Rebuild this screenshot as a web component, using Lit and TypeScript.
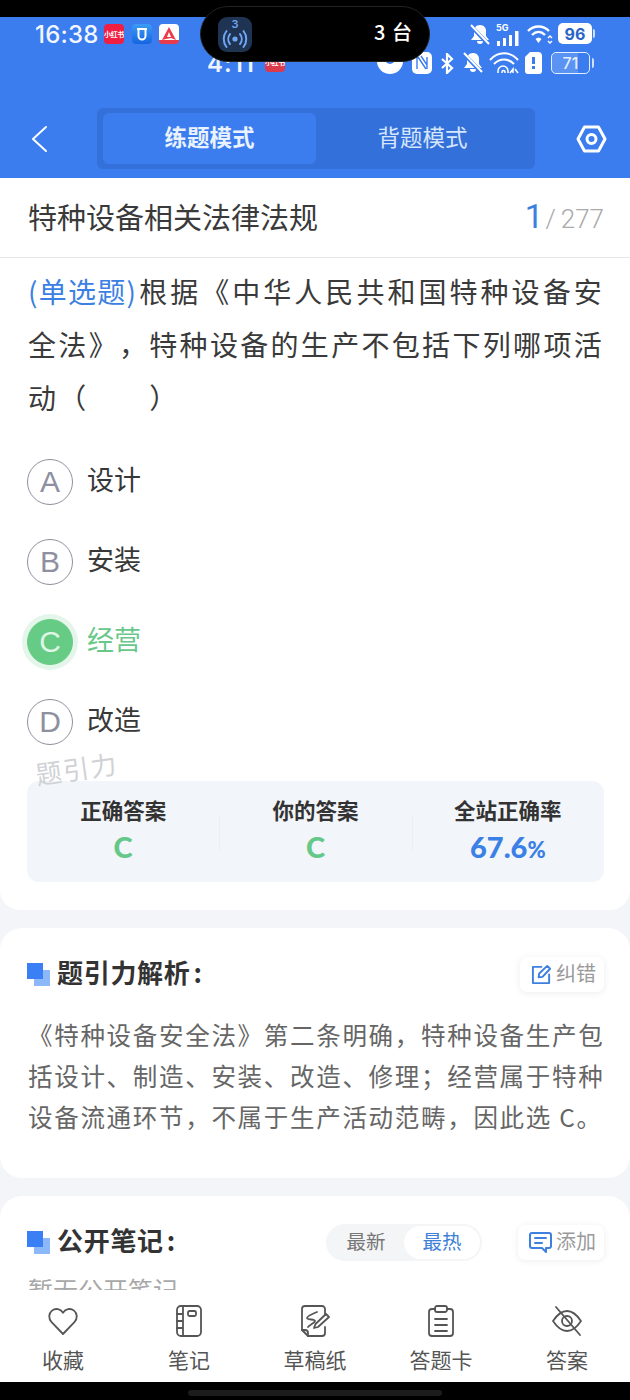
import { LitElement, html, css, svg } from "lit";
import { customElement } from "lit/decorators.js";

const line = (content: unknown, size: number, vb = 32) => html`<svg width=${size} height=${size} viewBox="0 0 ${vb} ${vb}" fill="none" stroke="currentColor" stroke-width="1.800" stroke-linecap="round" stroke-linejoin="round">${content}</svg>`;

const navIcons = {
  heart: svg`<path d="M16 29 4.600 17.200C1.200 13.500 1.600 8.300 5 5.600c3.600-2.800 8.400-1.700 11 2.200 2.600-3.900 7.400-5 11-2.200 3.400 2.700 3.800 7.900.4 11.600Z"/>`,
  book: svg`<rect x="4" y="1" width="24" height="30" rx="4"/><path d="M10 1v30M4 9h6M4 16h6M4 23h6"/><rect x="15" y="6" width="8" height="5" rx="1.500"/>`,
  draft: svg`<path d="M26 10V4a3 3 0 0 0-3-3H6a3 3 0 0 0-3 3v21l6 6h14a3 3 0 0 0 3-3v-6"/><path d="M3 25h3a3 3 0 0 1 3 3v3"/><path d="M18 7c-5 2-10 4-10 6s8 1 8 3-5 3-7 6"/><path d="m15 23 1.500-4L27 9l3 3-11 10Z"/>`,
  card: svg`<path d="M10 4H7a3 3 0 0 0-3 3v21a3 3 0 0 0 3 3h18a3 3 0 0 0 3-3V7a3 3 0 0 0-3-3h-3"/><rect x="10" y="1" width="12" height="6" rx="2"/><path d="M10 14h12M10 20h12M10 26h12"/>`,
  eye: svg`<path d="M2 16c4-6 9-10 14-10s10 4 14 10c-4 6-9 10-14 10S6 22 2 16Z"/><circle cx="16" cy="16" r="5"/><path d="M5 2l24 28"/>`,
};

@customElement("app-root")
export class AppRoot extends LitElement {
  static styles = css`
    :host { display: block; width: 630px; height: 1400px; position: relative; overflow: hidden; background: #f3f5f8; color: #333; font-family: "Noto Sans CJK SC", "Noto Sans", sans-serif; }
    .frame { height: 1400px; display: flex; flex-direction: column; }
    .topblack { height: 17px; background: #000; flex: none; }
    .head { height: 161px; flex: none; background: #3b7dee; position: relative; overflow: hidden; }
    .tabbar { position: absolute; left: 0; right: 0; top: 91px; height: 61px; display: flex; align-items: center; }
    .back { width: 97px; padding-left: 30px; box-sizing: border-box; display: flex; color: #fff; }
    .seg { width: 438px; height: 61px; box-sizing: border-box; padding: 5px 6px; background: #3470d9; border-radius: 6px; display: flex; }
    .seg div { flex: 1; display: flex; align-items: center; justify-content: center; font-size: 22.500px; color: #d5e6fd; border-radius: 6px; padding-bottom: 5px; box-sizing: border-box; }
    .seg .on { background: #3b7dee; color: #e9f2ff; font-weight: 700; flex: 0 0 213px; }
    .gear { flex: 1; display: flex; justify-content: center; padding-left: 17px; color: #fff; }
    .time { position: absolute; left: 35px; top: 1px; font: 500 24px/34px "Inter", sans-serif; letter-spacing: .2px; color: #f2f6ff; }
    .t2 { position: absolute; left: 207px; top: 30px; font: 600 24px/34px "Inter", sans-serif; color: #eef4ff; letter-spacing: 1px; }
    .ai { position: absolute; width: 20px; height: 20px; border-radius: 4px; display: flex; align-items: center; justify-content: center; font-size: 7px; font-weight: 700; color: #fff; overflow: hidden; white-space: nowrap; letter-spacing: -.4px; }
    .r { background: #f01f42; }
    .r2 { background: #db3a4c; }
    .b { background: linear-gradient(#3b9cf5, #1465e0); }
    .w { background: linear-gradient(#fff 78%, #ea3b4b 78%); }
    .abs { position: absolute; }
    .island { position: absolute; left: 200px; top: 6px; width: 230px; height: 56px; box-sizing: border-box; background: #000; border-radius: 28px; border: 1px solid #222; color: #fff; z-index: 2; }
    .isl-icon { position: absolute; left: 17px; top: 10px; width: 34px; height: 35px; border-radius: 9px; background: #1f3352; color: #6ea6f5; text-align: center; font: 600 11px/12px "Inter", sans-serif; padding-top: 1px; box-sizing: border-box; }
    .isl-icon svg { display: block; margin: -1px auto 0; }
    .isl-n { position: absolute; left: 173px; top: 10px; font-size: 20px; line-height: 30px; font-weight: 500; letter-spacing: 1px; }
    .batt { position: absolute; box-sizing: border-box; display: flex; align-items: center; justify-content: center; font: 700 16px "Inter", sans-serif; border-radius: 5px; }
    .b1 { left: 558px; top: 6px; width: 34px; height: 21px; background: #fff; color: #2a63c8; }
    .b2 { left: 551px; top: 35px; width: 39px; height: 22px; border: 1.500px solid #e3eeff; color: #e3eeff; background: linear-gradient(90deg, #5a93f1 71%, transparent 71%); font-weight: 500; }
    .nub { position: absolute; width: 2px; background: #cfe0fb; border-radius: 0 2px 2px 0; }
    .tiny { position: absolute; left: 496px; top: 6px; font: 700 9px/10px "Inter", sans-serif; color: #fff; }

    .scroll { flex: 1; min-height: 0; overflow: hidden; position: relative; }
    .card1 { background: #fff; border-radius: 0 0 20px 20px; height: 732px; position: relative; }
    .subject { height: 80px; box-sizing: border-box; border-bottom: 1px solid #e5e7ea; padding: 0 26px 4px 28px; display: flex; align-items: center; justify-content: space-between; }
    .subject h1 { margin: 0; font-size: 29px; font-weight: 400; color: #3a3a3a; }
    .count { color: #aaa; font: 300 26px/40px "Roboto", sans-serif; display: flex; align-items: baseline; gap: 2px; margin-top: 4px; }
    .count b { color: #3d80e0; font-size: 33px; font-weight: 400; }
    .count .of { display: flex; gap: 5px; }
    .q { margin: 0; padding: 7px 26px 0 28px; font-size: 28px; letter-spacing: 2.300px; line-height: 53px; color: #3a3a3a; text-align: justify; text-spacing-trim: space-all; }
    .q span { color: #3b80e3; letter-spacing: .5px; margin-right: 2px; }
    .opts { padding: 18px 27px 0; }
    .opt { height: 80px; display: flex; align-items: center; gap: 14px; font-size: 27px; color: #383838; }
    .opt .t { padding-bottom: 8px; }
    .dot { width: 46px; height: 46px; box-sizing: border-box; border: 1.500px solid #90909e; border-radius: 50%; display: flex; align-items: center; justify-content: center; font: 400 30px "Liberation Sans", sans-serif; color: #8e90a0; }
    .opt.ok { color: #67c88a; }
    .opt.ok .dot { background: #66cc85; border-color: #66cc85; color: #dff5e6; box-shadow: 0 0 0 5px #e3f6e9; }
    .wm { position: absolute; left: 33px; top: 577px; font-size: 26px; color: #d0d2d6; transform: rotate(-8deg); transform-origin: left top; letter-spacing: 1.500px; z-index: 1; }
    .stats { margin: 19px 26px 0 27px; height: 101px; background: #f2f5f9; border-radius: 12px; display: grid; grid-template-columns: repeat(3, 1fr); }
    .stat { display: flex; flex-direction: column; align-items: center; padding-top: 14px; position: relative; }
    .stat + .stat::before { content: ""; position: absolute; left: 0; top: 34px; height: 36px; width: 1px; background: #ecEff3; }
    .stat .l { font-size: 21.500px; font-weight: 700; line-height: 30px; color: #333; }
    .stat .v { font: 900 29px/40px "Lato", sans-serif; color: #66c888; margin-top: 2px; }
    .stat .v.blue { color: #3b80e6; }
    .stat .v small { font-size: 22px; }
    .card { background: #fff; border-radius: 22px; margin-top: 18px; padding: 0 26px 0 27px; position: relative; }
    .c2 { height: 250px; }
    .c3 { height: 200px; }
    .chead { height: 92px; display: flex; align-items: center; justify-content: space-between; }
    .ttl { display: flex; align-items: center; gap: 7px; font-size: 26px; font-weight: 700; color: #333; letter-spacing: .7px; }
    .ttl .tx { padding-bottom: 6px; }
    .ttl .col { margin-left: 3px; }
    .sq { width: 23px; height: 23px; position: relative; flex: none; }
    .sq i { position: absolute; width: 16px; height: 16px; }
    .sq .a { left: 7px; top: 7px; background: #8cb8fa; }
    .sq .m { left: 0; top: 0; background: #3b7ff5; }
    .mini { display: flex; align-items: center; gap: 4px; height: 35px; box-sizing: border-box; padding: 0 8px 0 11px; border-radius: 7px; background: #fff; box-shadow: 0 1px 7px rgba(0,0,0,.08); color: #9a9a9a; font-size: 20px; }
    .mini span { padding-bottom: 3px; }
    .mini svg { color: #3d80e0; flex: none; }
    .body { margin: -6px 0 0 1px; font-size: 24.500px; line-height: 41px; letter-spacing: 1.700px; color: #666; width: 585px; }
    .right { display: flex; align-items: center; gap: 36px; }
    .toggle { width: 156px; height: 37px; box-sizing: border-box; padding: 2px; border-radius: 19px; background: #f4f5f6; display: flex; font-size: 19.500px; color: #777; }
    .toggle div { flex: 1; display: flex; align-items: center; justify-content: center; border-radius: 17px; padding-bottom: 3px; box-sizing: border-box; }
    .toggle .on { flex: 0 0 76px; background: #fff; color: #3d80d8; }
    .empty { margin: -16px 0 0 1px; font-size: 25px; line-height: 34px; color: #a8a8a8; height: 34px; overflow: hidden; }
    .nav { flex: none; height: 92px; background: #fff; display: grid; grid-template-columns: repeat(5, 1fr); position: relative; }
    .nav div { display: flex; flex-direction: column; align-items: center; padding-top: 15px; color: #555; font-size: 21px; line-height: 30px; gap: 7px; }
    .nav svg { display: block; }
    .foot { height: 18px; flex: none; background: #000; position: relative; display: flex; justify-content: center; align-items: center; }
    .foot i { width: 254px; height: 6px; margin-top: 3px; border-radius: 3px; background: #1c1c1c; }
  `;

  private opt(k: string, t: string, ok = false) {
    return html`<div class="opt ${ok ? "ok" : ""}"><span class="dot">${k}</span><span class="t">${t}</span></div>`;
  }
  private stat(l: string, v: unknown, blue = false) {
    return html`<div class="stat"><span class="l">${l}</span><span class="v ${blue ? "blue" : ""}">${v}</span></div>`;
  }
  private nav(icon: unknown, label: string) {
    return html`<div>${line(icon, 32)}<span>${label}</span></div>`;
  }
  private title(t: string) {
    return html`<div class="ttl"><span class="sq"><i class="a"></i><i class="m"></i></span><span class="tx">${t}<span class="col">:</span></span></div>`;
  }

  render() {
    const bell = svg`<path d="M11 1c4 0 6 3 6 6v5l3 4H2l3-4V7c0-3 2-6 6-6Zm-3 16h6a3 3 0 0 1-6 0Z"/><path d="M1 1l19 20" stroke="#3b7dee" stroke-width="4"/><path d="M2 1l18 19" stroke="#fff" stroke-width="2"/>`;
    return html`<div class="frame">
      <div class="topblack"></div>
      <header class="head">
        <span class="time">16:38</span>
        <span class="ai r" style="left:104px;top:7px">小红书</span>
        <span class="ai b" style="left:132px;top:7px"><svg width="12" height="13" viewBox="0 0 12 13" fill="none" stroke="#fff" stroke-width="2"><path d="M1 1h10M2.500 1v7a3.500 3.500 0 0 0 7 0V1"/></svg></span>
        <span class="ai w" style="left:159px;top:7px"><svg width="16" height="14" viewBox="0 0 16 14" fill="#ea3b4b"><path d="M8 0l7 13-5-2-5 1-4 1Zm0 5-2 5h4Z" fill-rule="evenodd"/></svg></span>
        <span class="t2">4:11</span>
        <span class="ai r2" style="left:265px;top:35px">小红书</span>

        <svg class="abs" style="left:469px;top:7px" width="22" height="22" viewBox="0 0 22 22" fill="#fff">${bell}</svg>
        <span class="tiny">5G</span>
        <svg class="abs" style="left:496px;top:14px" width="24" height="16" viewBox="0 0 24 16" fill="#fff"><rect x="1" y="10" width="3" height="5"/><rect x="7" y="7" width="3" height="8"/><rect x="13" y="4" width="3" height="11"/><rect x="19" y="0" width="3.500" height="15"/></svg>
        <svg class="abs" style="left:527px;top:7px" width="26" height="21" viewBox="0 0 26 21" fill="none" stroke="#fff" stroke-width="2.400"><path d="M1 7c6-6 15-6 21 0M5 11c4-4 9-4 13 0"/><path d="M8.500 15c2-2 4-2 6 0l-3 4Z" fill="#fff" stroke="none"/><path d="M21 14l2-2 2 2M21 17l2 2 2-2" stroke-width="1.400"/></svg>
        <span class="batt b1">96</span><span class="nub" style="left:593px;top:12px;height:9px"></span>

        <svg class="abs" style="left:376px;top:33px" width="28" height="24" viewBox="0 0 28 24" fill="#fff"><circle cx="14" cy="11" r="13"/><circle cx="14" cy="9" r="5" fill="#3b7dee"/></svg>
        <svg class="abs" style="left:412px;top:35px" width="20" height="22" viewBox="0 0 20 22"><rect width="20" height="22" rx="5" fill="#fff"/><path d="M5 5v12M15 5v12M6 5l8 12M9 4l6 9" stroke="#3b7dee" stroke-width="1.400" fill="none"/></svg>
        <svg class="abs" style="left:440px;top:36px" width="14" height="21" viewBox="0 0 14 21" fill="none" stroke="#fff" stroke-width="2.200"><path d="M2 6l10 9-5 5V1l5 5L2 15"/></svg>
        <svg class="abs" style="left:462px;top:35px" width="22" height="22" viewBox="0 0 22 22" fill="#fff">${bell}</svg>
        <svg class="abs" style="left:489px;top:35px" width="30" height="22" viewBox="0 0 30 22" fill="none" stroke="#fff" stroke-width="2"><path d="M1 8c8-9 20-9 28 0M5 12c6-6 14-6 20 0"/><path d="M9 21v-2a5 5 0 0 1 10 0v2M13 21v-1a1.500 1.500 0 0 1 3 0v1" stroke-width="1.500"/><path d="M21 21l3-4v4M26 17l3 4" stroke-width="1.500"/></svg>
        <svg class="abs" style="left:525px;top:35px" width="17" height="22" viewBox="0 0 17 22"><path d="M5 0h8a4 4 0 0 1 4 4v15a3 3 0 0 1-3 3H3a3 3 0 0 1-3-3V5Z" fill="#fff"/><rect x="7" y="5" width="3" height="7" fill="#3b7dee"/><rect x="7" y="14" width="3" height="3" fill="#3b7dee"/></svg>
        <span class="batt b2">71</span><span class="nub" style="left:592px;top:41px;height:10px"></span>

        <div class="tabbar">
          <div class="back"><svg width="18" height="28" viewBox="0 0 18 28" fill="none" stroke="currentColor" stroke-width="2" stroke-linecap="round" stroke-linejoin="round"><path d="M16 2 3 14l13 12"/></svg></div>
          <div class="seg"><div class="on">练题模式</div><div>背题模式</div></div>
          <div class="gear"><svg width="31" height="28" viewBox="0 0 31 28" fill="none" stroke="currentColor" stroke-width="3" stroke-linejoin="round"><path d="M8.500 2h14l6.500 12-6.500 12h-14L2 14Z"/><circle cx="15.500" cy="14" r="4.500"/></svg></div>
        </div>
      </header>
      <div class="island">
        <div class="isl-icon">3<svg width="28" height="20" viewBox="0 0 28 20" fill="none" stroke="currentColor" stroke-width="2" stroke-linecap="round"><circle cx="14" cy="10" r="2.600" fill="currentColor" stroke="none"/><path d="M9 5a8 8 0 0 0 0 10M19 5a8 8 0 0 1 0 10M5.500 2a13 13 0 0 0 0 16M22.500 2a13 13 0 0 1 0 16"/></svg></div>
        <span class="isl-n">3 台</span>
      </div>

      <main class="scroll">
        <section class="card1">
          <div class="subject"><h1>特种设备相关法律法规</h1><div class="count"><b>1</b><div class="of"><span>/</span><span>277</span></div></div></div>
          <p class="q"><span>(单选题)</span>根据《中华人民共和国特种设备安全法》，特种设备的生产不包括下列哪项活动（　　）</p>
          <div class="opts">
            ${this.opt("A", "设计")}
            ${this.opt("B", "安装")}
            ${this.opt("C", "经营", true)}
            ${this.opt("D", "改造")}
          </div>
          <span class="wm">题引力</span>
          <div class="stats">
            ${this.stat("正确答案", "C")}
            ${this.stat("你的答案", "C")}
            ${this.stat("全站正确率", html`67.6<small>%</small>`, true)}
          </div>
        </section>
        <section class="card c2">
          <div class="chead">
            ${this.title("题引力解析")}
            <div class="mini"><svg width="21" height="21" viewBox="0 0 22 22" fill="none" stroke="currentColor" stroke-width="2" stroke-linecap="round" stroke-linejoin="round"><path d="M11 3H2v17h17v-9"/><path d="m8 14 .6-4L17 2l3 3-8 8.500Z"/></svg><span>纠错</span></div>
          </div>
          <p class="body">《特种设备安全法》第二条明确，特种设备生产包括设计、制造、安装、改造、修理；经营属于特种设备流通环节，不属于生产活动范畴，因此选 C。</p>
        </section>
        <section class="card c3">
          <div class="chead">
            ${this.title("公开笔记")}
            <div class="right">
              <div class="toggle"><div>最新</div><div class="on">最热</div></div>
              <div class="mini"><svg width="23" height="21" viewBox="0 0 23 21" fill="none" stroke="currentColor" stroke-width="2" stroke-linejoin="round" stroke-linecap="round"><path d="M3 1h17a2 2 0 0 1 2 2v11a2 2 0 0 1-2 2h-3v4l-4-4H3a2 2 0 0 1-2-2V3a2 2 0 0 1 2-2Z"/><path d="M6 6h11M6 11h7"/></svg><span>添加</span></div>
            </div>
          </div>
          <div class="empty">暂无公开笔记</div>
        </section>
      </main>
      <nav class="nav">
        ${this.nav(navIcons.heart, "收藏")}
        ${this.nav(navIcons.book, "笔记")}
        ${this.nav(navIcons.draft, "草稿纸")}
        ${this.nav(navIcons.card, "答题卡")}
        ${this.nav(navIcons.eye, "答案")}
      </nav>
      <div class="foot"><i></i></div>
    </div>`;
  }
}
